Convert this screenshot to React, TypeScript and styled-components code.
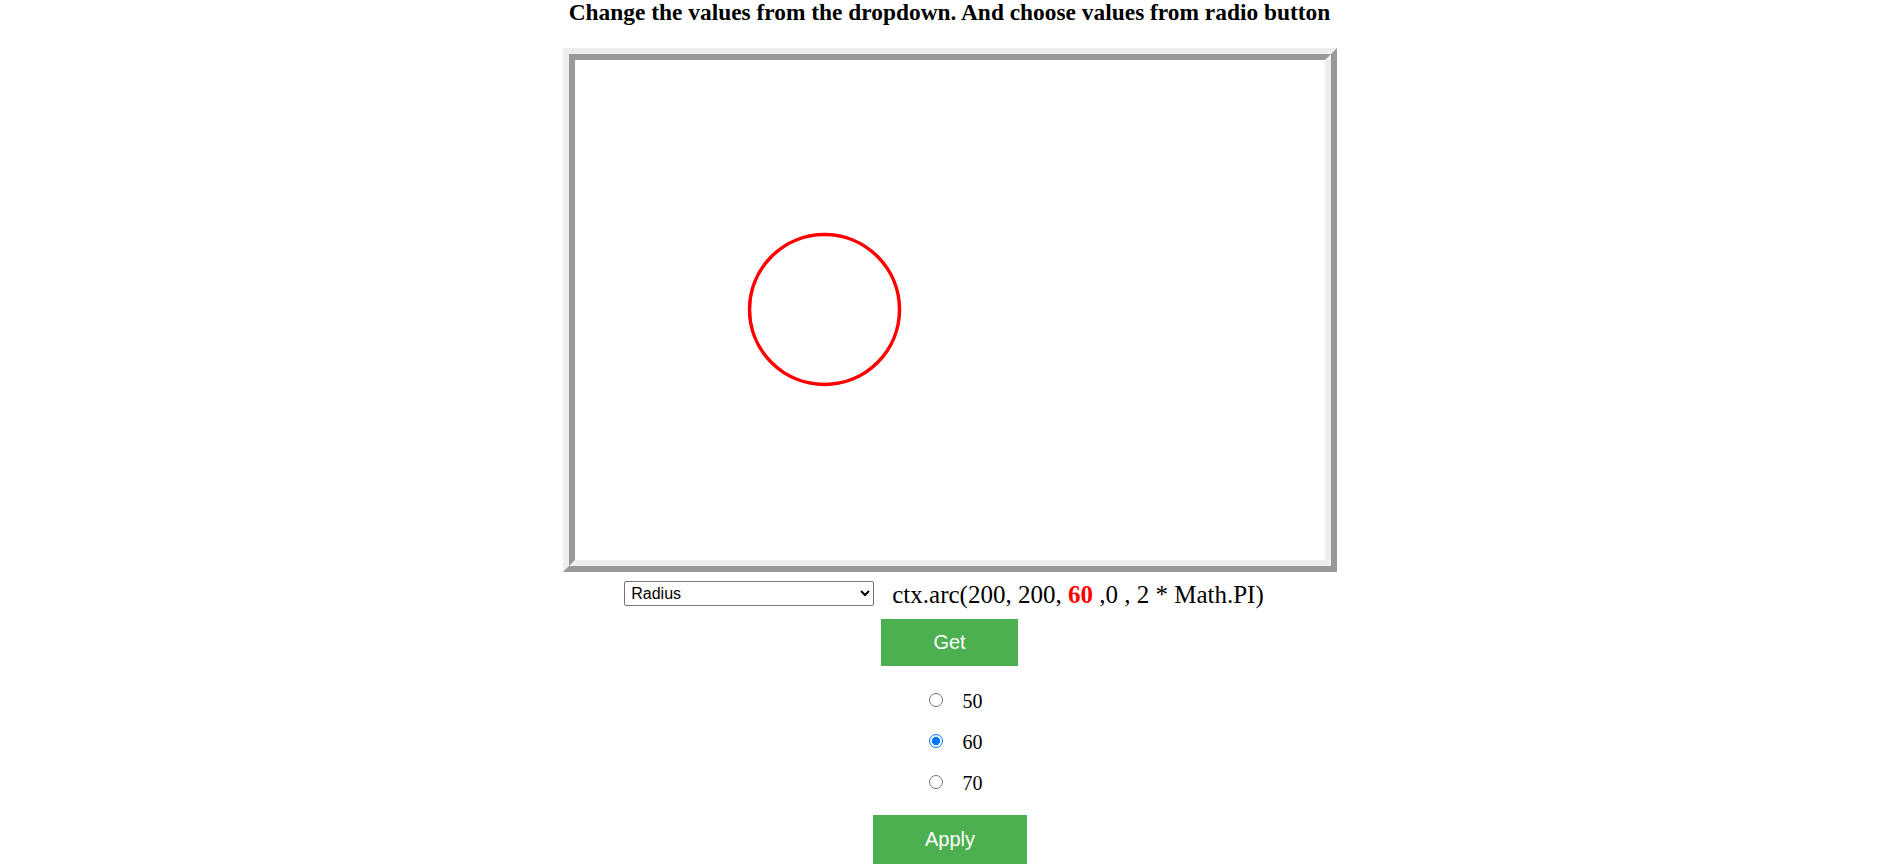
import React, { useState } from "react";
import styled, { createGlobalStyle } from "styled-components";

const GlobalStyle = createGlobalStyle`
  html, body { margin: 0; padding: 0; background: #ffffff; }
  body { font-family: "Liberation Serif", "Times New Roman", serif; color: #000; }
`;

const Page = styled.div`
  display: flex;
  flex-direction: column;
  align-items: center;
  width: 100%;
`;

const Title = styled.h3`
  margin: 0;
  font-family: "Liberation Serif", "Times New Roman", serif;
  font-weight: bold;
  font-size: 23.4px;
  line-height: 25px;
  margin-left: 2px;
`;

const FrameOuter = styled.div`
  margin-top: 23px;
  margin-left: 3px;
  border-style: solid;
  border-width: 6px;
  border-color: #eeeeee #999999 #999999 #eeeeee;
`;

const FrameInner = styled.div`
  border-style: solid;
  border-width: 6px;
  border-color: #999999 #eeeeee #eeeeee #999999;
  width: 750px;
  height: 500px;
  background: #ffffff;
  svg { display: block; }
`;

const ControlRow = styled.div`
  margin-top: 9px;
  display: flex;
  align-items: flex-start;
  gap: 18px;
  padding-right: 9px;
`;

const Select = styled.select`
  width: 250px;
  height: 25px;
  font-family: "Liberation Sans", Arial, sans-serif;
  font-size: 16px;
  color: #000;
  background: #fff;
  border: 1px solid #767676;
  border-radius: 2px;
  padding: 0 2px;
  margin: 0;
`;

const Code = styled.span`
  font-family: "Liberation Serif", "Times New Roman", serif;
  font-size: 25px;
  line-height: 28px;
  white-space: pre;
`;

const Highlight = styled.b`
  color: #ff0000;
`;

const ActionButton = styled.button`
  background: #4caf50;
  color: #ffffff;
  border: none;
  font-family: "Liberation Sans", Arial, sans-serif;
  font-size: 20px;
  line-height: 23px;
  margin: 0;
  cursor: pointer;
`;

const GetButton = styled(ActionButton)`
  padding: 12px 52px;
  margin-top: 10px;
  margin-left: 2px;
`;

const ApplyButton = styled(ActionButton)`
  padding: 13px 52px;
  margin-top: 13px;
  margin-left: 3px;
`;

const RadioGroup = styled.div`
  margin-top: 13px;
  display: flex;
  flex-direction: column;
  margin-left: 14px;
`;

const RadioRow = styled.label`
  display: flex;
  align-items: center;
  height: 41px;
  gap: 20px;
  font-family: "Liberation Serif", "Times New Roman", serif;
  font-size: 20px;
  cursor: pointer;
`;

const RadioText = styled.span`
  padding-top: 4px;
`;

const Radio = styled.input`
  width: 14px;
  height: 14px;
  margin: 0;
  accent-color: #0075ff;
`;

export default function App() {
  const [value, setValue] = useState(60);
  return (
    <>
      <GlobalStyle />
      <Page>
        <Title>Change the values from the dropdown. And choose values from radio button</Title>
        <FrameOuter>
          <FrameInner>
            <svg width="750" height="500" viewBox="0 0 750 500">
              <circle cx="249.5" cy="249.5" r="75" fill="none" stroke="#ff0000" strokeWidth="3.5" />
            </svg>
          </FrameInner>
        </FrameOuter>
        <ControlRow>
          <Select defaultValue="radius">
            <option value="radius">Radius</option>
            <option value="x">X</option>
            <option value="y">Y</option>
          </Select>
          <Code>
            ctx.arc(200, 200, <Highlight>60</Highlight> ,0 , 2 * Math.PI)
          </Code>
        </ControlRow>
        <GetButton>Get</GetButton>
        <RadioGroup>
          {[50, 60, 70].map((v) => (
            <RadioRow key={v}>
              <Radio type="radio" name="val" checked={value === v} onChange={() => setValue(v)} />
              <RadioText>{v}</RadioText>
            </RadioRow>
          ))}
        </RadioGroup>
        <ApplyButton>Apply</ApplyButton>
      </Page>
    </>
  );
}
